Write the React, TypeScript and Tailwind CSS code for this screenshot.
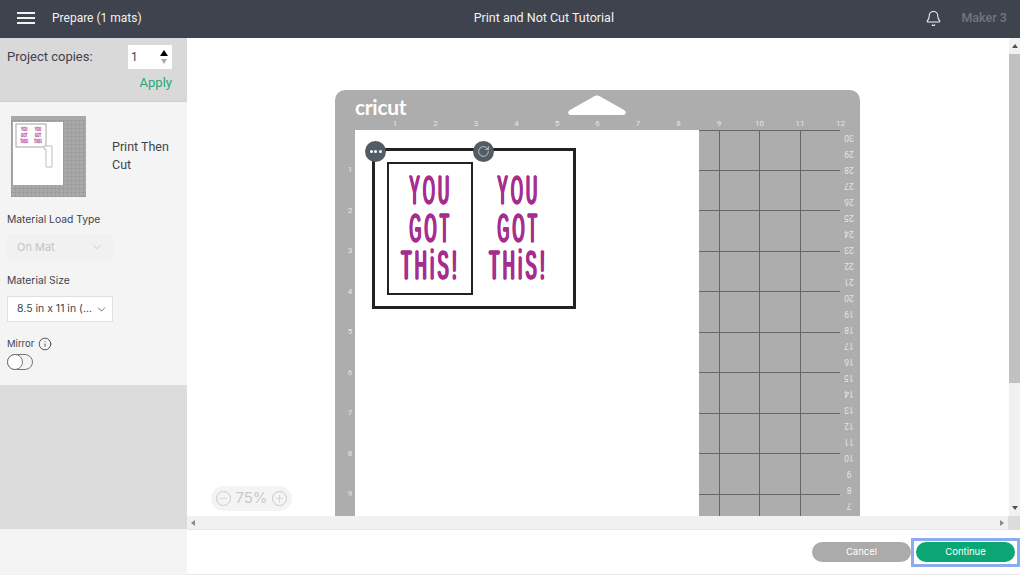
import { Bell, ChevronDown, Info, Minus, Plus, RotateCw } from "lucide-react";

const topNumbers = [1, 2, 3, 4, 5, 6, 7, 8, 9, 10, 11, 12];
const leftNumbers = [1, 2, 3, 4, 5, 6, 7, 8, 9];
const rightNumbers = [30, 29, 28, 27, 26, 25, 24, 23, 22, 21, 20, 19, 18, 17, 16, 15, 14, 13, 12, 11, 10, 9, 8, 7];
const gridColumns = [20, 60, 101];
const gridRows = [0, 40, 80, 121, 161, 202, 242, 283, 323, 364];

// condensed poster lettering: no narrow font is installed, so squeeze and thicken the stems
const Lettering = ({ className }: { className: string }) => (
  <div className={className} style={{ fontFamily: "'Liberation Sans', sans-serif" }}>
    <div className="flex h-[112px] w-[64px] flex-col items-center text-[41px] leading-[37.5px] tracking-[9px] text-[#a62c8e] [-webkit-text-stroke:1.5px_#a62c8e] [text-shadow:2.2px_0_0_#a62c8e,-2.2px_0_0_#a62c8e]">
      <span className="scale-x-[0.37] whitespace-nowrap">YOU</span>
      <span className="scale-x-[0.37] whitespace-nowrap">GOT</span>
      <span className="scale-x-[0.4] whitespace-nowrap">THiS!</span>
    </div>
  </div>
);

const ThumbWords = ({ x }: { x: number }) => (
  <g transform="scale(0.55,1)">
    <text x={x} y="15" textAnchor="middle">YOU</text>
    <text x={x} y="21" textAnchor="middle">GOT</text>
    <text x={x} y="27" textAnchor="middle">THiS!</text>
  </g>
);

const MatThumbnail = () => (
  <svg viewBox="0 0 75 81" className="h-[81px] w-[75px] shrink-0">
    <defs>
      <pattern id="thumb-grid" width="4" height="4" patternUnits="userSpaceOnUse">
        <path d="M4 0H0V4" fill="none" stroke="#8b8b8b" strokeWidth="0.7" />
      </pattern>
    </defs>
    <rect width="75" height="81" fill="#a9a9a9" />
    <rect x="0" y="4" width="75" height="77" fill="url(#thumb-grid)" />
    <rect x="2" y="6" width="50" height="63" fill="#ffffff" />
    <rect x="5" y="8" width="30" height="23" fill="#ffffff" stroke="#8f8f8f" strokeWidth="0.8" />
    <g fill="#c0579f" stroke="#c0579f" strokeWidth="0.3" fontSize="5.5" fontWeight="700" fontFamily="'Liberation Sans', sans-serif">
      <ThumbWords x={24} />
      <ThumbWords x={49} />
    </g>
    <path d="M33 30H41V51H35V33H33Z" fill="#ffffff" stroke="#bdbdbd" strokeWidth="1" />
  </svg>
);

const Sidebar = () => (
  <aside className="flex w-[187px] shrink-0 flex-col text-[#3f434d]">
    <div className="flex h-[64px] flex-col border-b border-[#cfcfcf] bg-[#d9d9d9] pl-[7px] pr-[15px] pt-[7px]" style={{ fontFamily: "Roboto, sans-serif" }}>
      <div className="flex items-center justify-between">
        <span className="text-[13px]">Project copies:</span>
        <div className="flex h-[24px] w-[44px] items-center justify-between bg-white pl-[3px] pr-[4px] text-[12px]">
          <span>1</span>
          <div className="flex flex-col items-center gap-[3px]">
            <div className="h-0 w-0 border-x-[4px] border-b-[6px] border-x-transparent border-b-black" />
            <div className="h-0 w-0 border-x-[3px] border-t-[5px] border-x-transparent border-t-[#a9a9a9]" />
          </div>
        </div>
      </div>
      <span className="mt-[5px] self-end text-[13px] leading-[18px] text-[#1fa97c]">Apply</span>
    </div>
    <div className="flex h-[283px] flex-col bg-[#f4f4f4] px-[7px]">
      <div className="ml-[4px] mt-[14px] flex items-center gap-[26px]" style={{ fontFamily: "Roboto, sans-serif" }}>
        <MatThumbnail />
        <span className="mb-[2px] text-[12.5px] leading-[18px]">Print Then Cut</span>
      </div>
      <span className="mt-[15px] text-[10.3px] leading-[14px]">Material Load Type</span>
      <div className="mt-[8px] flex h-[26px] w-[106px] items-center justify-between bg-[#f1f1f1] pl-[10px] pr-[9px] text-[11px] text-[#c4c4c4]">
        <span>On Mat</span>
        <ChevronDown size={14} strokeWidth={1.2} />
      </div>
      <span className="mt-[13px] text-[10.3px] leading-[14px]">Material Size</span>
      <div className="mt-[9px] flex h-[26px] w-[106px] items-center justify-between border border-[#e0e0e0] bg-white pl-[9px] pr-[4px] text-[10.5px]">
        <span className="whitespace-nowrap">8.5 in x 11 in (...</span>
        <ChevronDown size={13} strokeWidth={1.4} className="shrink-0" />
      </div>
      <div className="mt-[15px] flex items-center gap-[4px]">
        <span className="text-[9.5px] leading-[14px]">Mirror</span>
        <Info size={14} strokeWidth={1.5} />
      </div>
      <div className="relative mt-[3px] h-[16px] w-[26px] rounded-full border border-[#777777]">
        <div className="absolute -left-px -top-px h-[16px] w-[16px] rounded-full border border-[#777777] bg-white" />
      </div>
    </div>
    <div className="h-[144px] bg-[#dcdcdc]" />
    <div className="flex-1 bg-[#f4f4f4]" />
  </aside>
);

const Mat = () => (
  <div className="relative ml-[148px] mt-[52px] h-[426px] w-[525px] shrink-0 rounded-t-[10px] bg-[#adadad]" style={{ fontFamily: "Roboto, sans-serif" }}>
    <span className="absolute left-[20px] top-[3px] text-[21px] font-bold leading-[28px] tracking-[-0.3px] text-white" style={{ fontFamily: "Lato, sans-serif" }}>cricut</span>
    <svg viewBox="0 0 58 20" className="absolute left-[233px] top-[5px] h-[20px] w-[58px]">
      <path d="M3 20C0 20 -1 17 2 15L25 2C28 0 30 0 33 2L56 15C59 17 58 20 55 20Z" fill="#ffffff" />
    </svg>
    {topNumbers.map((n, i) => (
      <span key={n} className="absolute top-[29px] w-[14px] text-center text-[8px] leading-[10px] text-[#e6e6e6]" style={{ left: 53 + i * 40.5 }}>{n}</span>
    ))}
    {leftNumbers.map((n, i) => (
      <span key={n} className="absolute left-[8px] w-[14px] text-center text-[8px] leading-[10px] text-[#e6e6e6]" style={{ top: 75 + i * 40.5 }}>{n}</span>
    ))}
    {rightNumbers.map((n, i) => (
      <span key={n} className="absolute left-[506px] w-[16px] rotate-180 text-center text-[8.5px] leading-[10px] text-[#e6e6e6]" style={{ top: 43 + i * 16 }}>{n}</span>
    ))}
    <div className="absolute bottom-0 left-[20px] top-[40px] w-[344px] bg-white" />
    {gridColumns.map((x) => (
      <div key={x} className="absolute bottom-0 top-[40px] w-px bg-[#666666]" style={{ left: 364 + x }} />
    ))}
    {gridRows.map((y) => (
      <div key={y} className="absolute left-[364px] h-px w-[141px] bg-[#666666]" style={{ top: 40 + y }} />
    ))}
    <div className="absolute left-[37px] top-[58px] h-[161px] w-[204px] border-[3px] border-[#222222]" />
    <div className="absolute left-[52px] top-[72px] h-[133px] w-[86px] border-2 border-[#222222]" />
    <Lettering className="absolute left-[64px] top-[82px]" />
    <Lettering className="absolute left-[152px] top-[82px]" />
    <div className="absolute left-[30px] top-[51px] flex h-[21px] w-[21px] items-center justify-center gap-[1.5px] rounded-full bg-[#515c64]">
      <div className="h-[3px] w-[3px] rounded-full bg-white" />
      <div className="h-[3px] w-[3px] rounded-full bg-white" />
      <div className="h-[3px] w-[3px] rounded-full bg-white" />
    </div>
    <div className="absolute left-[138px] top-[51px] flex h-[21px] w-[21px] items-center justify-center rounded-full bg-[#515c64] text-[#d8d8d8]">
      <RotateCw size={13} strokeWidth={1.5} />
    </div>
  </div>
);

const Workspace = () => (
  <div className="relative flex min-w-0 flex-1 flex-col">
    <div className="flex min-h-0 flex-1">
      <div className="flex min-w-0 flex-1 overflow-hidden bg-white">
        <Mat />
      </div>
      <div className="flex w-[11px] shrink-0 flex-col bg-[#f1f1f1]">
        <div className="flex h-[16px] items-center justify-center">
          <div className="h-0 w-0 border-x-[3px] border-b-[4px] border-x-transparent border-b-[#505050]" />
        </div>
        <div className="h-[329px] bg-[#c1c1c1]" />
        <div className="flex-1" />
        <div className="flex h-[16px] items-center justify-center">
          <div className="h-0 w-0 border-x-[3px] border-t-[4px] border-x-transparent border-t-[#505050]" />
        </div>
      </div>
    </div>
    <div className="flex h-[14px] shrink-0 items-center justify-between border-b border-[#e6e6e6] bg-[#f1f1f1] pl-[4px]">
      <div className="h-0 w-0 border-y-[3px] border-r-[4px] border-y-transparent border-r-[#8a8a8a]" />
      <div className="flex items-center gap-[4px]">
        <div className="h-0 w-0 border-y-[3px] border-l-[4px] border-y-transparent border-l-[#8a8a8a]" />
        <div className="h-[14px] w-[12px] bg-[#dcdcdc]" />
      </div>
    </div>
    <div className="flex h-[45px] shrink-0 items-center justify-end border-b border-[#e6e6e6] bg-white text-[9.5px] text-white">
      <button className="flex h-[20px] w-[99px] items-center justify-center rounded-full bg-[#ababab]">Cancel</button>
      <div className="flex h-[29px] w-[109px] items-center justify-center border-[3px] border-[#8fabf0]">
        <button className="flex h-[20px] w-[99px] items-center justify-center rounded-full bg-[#0aa774]">Continue</button>
      </div>
    </div>
    <div className="absolute left-[24px] top-[448px] flex h-[25px] w-[81px] items-center justify-center gap-[4px] rounded-full bg-[#f4f4f4] text-[15px] text-[#c9c9c9]">
      <div className="flex h-[15px] w-[15px] items-center justify-center rounded-full border border-[#c9c9c9]"><Minus size={11} strokeWidth={1.5} /></div>
      <span>75%</span>
      <div className="flex h-[15px] w-[15px] items-center justify-center rounded-full border border-[#c9c9c9]"><Plus size={11} strokeWidth={1.5} /></div>
    </div>
  </div>
);

export default function App() {
  return (
    <div className="flex h-[575px] w-[1020px] flex-col overflow-hidden bg-white" style={{ fontFamily: "Inter, Roboto, sans-serif" }}>
      <header className="flex h-[38px] shrink-0 items-center bg-[#3f434d] pb-[2px] text-[12.5px] text-[#f2f2f2]" style={{ fontFamily: "Roboto, sans-serif" }}>
        <div className="ml-[17px] flex w-[18px] flex-col gap-[3px]">
          <div className="h-[2px] bg-[#f2f2f2]" />
          <div className="h-[2px] bg-[#f2f2f2]" />
          <div className="h-[2px] bg-[#f2f2f2]" />
        </div>
        <span className="ml-[17px] text-[12px]">Prepare (1 mats)</span>
        <span className="ml-[332px]">Print and Not Cut Tutorial</span>
        <Bell size={17} strokeWidth={1.5} className="ml-auto" />
        <span className="ml-[19px] mr-[13px] font-semibold text-[#6f737c]">Maker 3</span>
      </header>
      <div className="flex min-h-0 flex-1">
        <Sidebar />
        <Workspace />
      </div>
    </div>
  );
}
